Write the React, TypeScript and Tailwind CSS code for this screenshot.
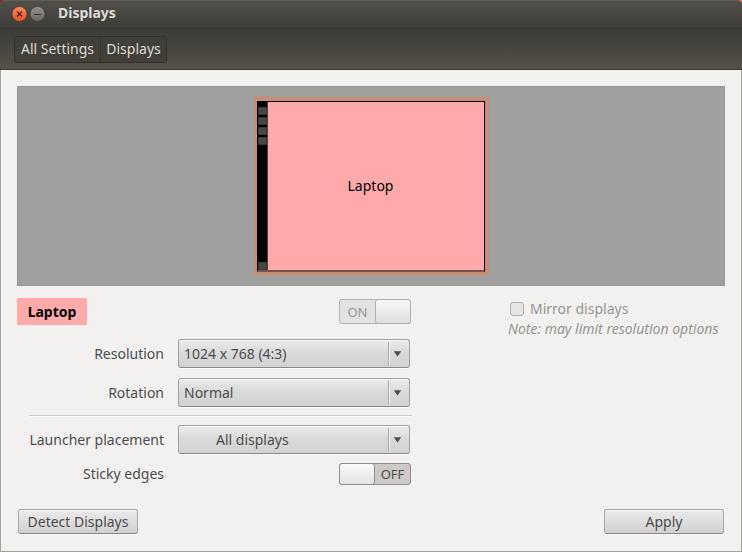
import type { ReactNode } from "react";

function Combo({ id, options, indent }: { id: string; options: string[]; indent?: boolean }) {
  return (
    <div className="relative h-[29px] w-[232px]">
      <select
        id={id}
        className={`block h-full w-full appearance-none rounded-[3px] border border-[#a3a19e] border-b-[#8b8985] bg-linear-to-b from-[#ebebeb] via-[#d9d9d9] to-[#d2d2d2] pr-7 text-[#4c4c4c] shadow-[inset_0_1px_0_#f8f8f8,0_1px_0_#fafafa] outline-none ${indent ? "pl-[37px]" : "pl-[5px]"}`}
      >
        {options.map((o) => (
          <option key={o}>{o}</option>
        ))}
      </select>
      <span className="pointer-events-none absolute inset-y-[3px] right-0 flex w-[22px] items-center border-l border-[#aaa8a5] pl-1 shadow-[inset_1px_0_0_#efefef]">
        <svg width="9" height="7" viewBox="0 0 9 7">
          <path d="M0.8 1.2h7.4L4.5 6.4z" fill="#4c4c4c" />
        </svg>
      </span>
    </div>
  );
}

function Row({ id, label, children }: { id: string; label: string; children: ReactNode }) {
  return (
    <div className="grid grid-cols-[147px_232px] items-center gap-x-[14px]">
      <label htmlFor={id} className="text-right whitespace-nowrap">
        {label}
      </label>
      {children}
    </div>
  );
}

function LauncherTile() {
  return <span className="block h-2 border border-[#383838] bg-[#464646]" />;
}

const pushButton =
  "h-[25px] w-[120px] rounded-[3px] border border-[#a8a6a3] border-b-[#8b8985] bg-linear-to-b from-[#ebebeb] to-[#d0d0d0] leading-5 whitespace-nowrap shadow-[inset_0_1px_0_#f8f8f8,0_1px_0_#fafafa]";

export default function App() {
  return (
    <div className="bg-[#3c3b37] font-['Noto_Sans','Open_Sans',sans-serif] text-[14px] leading-5 text-[#4c4c4c]">
      <div className="flex min-h-screen flex-col overflow-hidden bg-[#f2f1f0]">
        <header className="bg-linear-to-r from-[#8a2434] from-50% to-[#f0604f] to-50% text-[#dfdbd2]">
          <div className="flex h-7 items-center rounded-t-[5px] border-t border-[#5f5e58] bg-linear-to-b from-[#504f49] to-[#3e3d39] pb-px pl-3">
            <button type="button" aria-label="Close" className="size-4">
              <svg width="16" height="16" viewBox="0 0 16 16">
                <defs>
                  <linearGradient id="closeFill" x1="0" y1="0" x2="0" y2="1">
                    <stop offset="0" stopColor="#f98a66" />
                    <stop offset="1" stopColor="#e6511c" />
                  </linearGradient>
                </defs>
                <circle cx="7.5" cy="8" r="7.5" fill="url(#closeFill)" stroke="#35332f" strokeWidth="0.6" />
                <path d="M5 5.5l5 5M10 5.5l-5 5" stroke="#49251a" strokeWidth="1.2" />
              </svg>
            </button>
            <button type="button" aria-label="Minimize" className="ml-[2px] size-4">
              <svg width="16" height="16" viewBox="0 0 16 16">
                <defs>
                  <linearGradient id="minFill" x1="0" y1="0" x2="0" y2="1">
                    <stop offset="0" stopColor="#94928a" />
                    <stop offset="1" stopColor="#6a6861" />
                  </linearGradient>
                </defs>
                <circle cx="7.5" cy="8" r="7.5" fill="url(#minFill)" stroke="#35332f" strokeWidth="0.6" />
                <path d="M4 8.5h7" stroke="#34332f" />
              </svg>
            </button>
            <h1 className="ml-3 pb-[2px] font-bold">Displays</h1>
          </div>
          <nav className="flex h-[42px] items-center border-t border-b border-t-[#353430] border-b-[#3a3833] bg-linear-to-b from-[#3c3b37] to-[#565148] px-[14px]">
            <div className="flex h-[27px] rounded-[3px] border border-[#31302c] bg-[#403f3a]">
              <button type="button" className="w-[86px] border-r border-[#31302c] whitespace-nowrap">
                All Settings
              </button>
              <button type="button" className="w-[65px] whitespace-nowrap">
                Displays
              </button>
            </div>
          </nav>
        </header>

        <main className="flex grow flex-col border border-t-0 border-[#a5a19c] px-4 pt-4 pb-[17px]">
          <section className="flex h-[200px] items-center justify-center border border-[#979795] bg-[#9f9f9d]">
            <div className="flex h-[178px] w-[235px] border-x-4 border-t-4 border-b-3 border-l-3 border-[#c98d73]">
              <div className="relative flex grow items-center justify-center border border-b-2 border-black border-b-[#7a5050] bg-[#ffaaaa] text-black">
                <div className="absolute inset-y-0 left-0 flex w-[10px] flex-col gap-[2px] border-r border-[#5a3c3c] bg-black pt-[5px]">
                  <LauncherTile />
                  <LauncherTile />
                  <LauncherTile />
                  <LauncherTile />
                  <div className="mt-auto">
                    <LauncherTile />
                  </div>
                </div>
                Laptop
              </div>
            </div>
          </section>

          <div className="mt-3 flex justify-between">
            <div className="w-[395px]">
              <div className="flex h-[27px] items-center justify-between pr-px">
                <h2 className="flex h-full w-[70px] items-center justify-center bg-[#ffaaaa] font-bold text-black">
                  Laptop
                </h2>
                <label className="flex h-[25px] w-[72px] rounded-[3px] border border-[#b5b2ae] bg-[#e4e2e0] text-[13px] text-[#98958f]">
                  <input type="checkbox" role="switch" aria-label="Laptop enabled" defaultChecked disabled className="sr-only" />
                  <span className="flex w-[35px] items-center justify-center">ON</span>
                  <span className="-my-px -mr-px grow rounded-[3px] border border-[#b5b2ae] bg-linear-to-b from-[#f8f8f7] to-[#dfdedd]" />
                </label>
              </div>
              <div className="mt-[14px] flex flex-col gap-[10px]">
                <Row id="resolution" label="Resolution">
                  <Combo id="resolution" options={["1024 x 768 (4:3)"]} />
                </Row>
                <Row id="rotation" label="Rotation">
                  <Combo id="rotation" options={["Normal"]} />
                </Row>
              </div>
              <hr className="mt-2 ml-3 border-[#ccc9c6] shadow-[0_1px_0_#fafafa]" />
              <div className="mt-[9px] flex flex-col gap-[9px]">
                <Row id="launcher" label="Launcher placement">
                  <Combo id="launcher" options={["All displays"]} indent />
                </Row>
                <Row id="sticky" label="Sticky edges">
                  <label htmlFor="sticky" className="-mr-px ml-auto flex h-[22px] w-[72px] rounded-[3px] border border-[#918e8a] bg-[#cdc9c6] text-[13px]">
                    <input id="sticky" type="checkbox" role="switch" className="sr-only" />
                    <span className="-my-px -ml-px w-9 rounded-[3px] border border-[#918e8a] bg-linear-to-b from-[#fafafa] to-[#e4e3e2]" />
                    <span className="flex grow items-center justify-center">OFF</span>
                  </label>
                </Row>
              </div>
            </div>

            <div className="w-[217px] text-[#98958f]">
              <label className="flex h-[21px] items-center gap-[6px] pl-[2px]">
                <input
                  type="checkbox"
                  disabled
                  className="size-[14px] appearance-none rounded-[3px] border border-[#b3afaa] bg-[#e6e5e4]"
                />
                Mirror displays
              </label>
              <p className="whitespace-nowrap italic">Note: may limit resolution options</p>
            </div>
          </div>

          <div className="mt-auto flex justify-between px-px pt-6">
            <button type="button" className={pushButton}>
              Detect Displays
            </button>
            <button type="button" className={pushButton}>
              Apply
            </button>
          </div>
        </main>
      </div>
    </div>
  );
}
